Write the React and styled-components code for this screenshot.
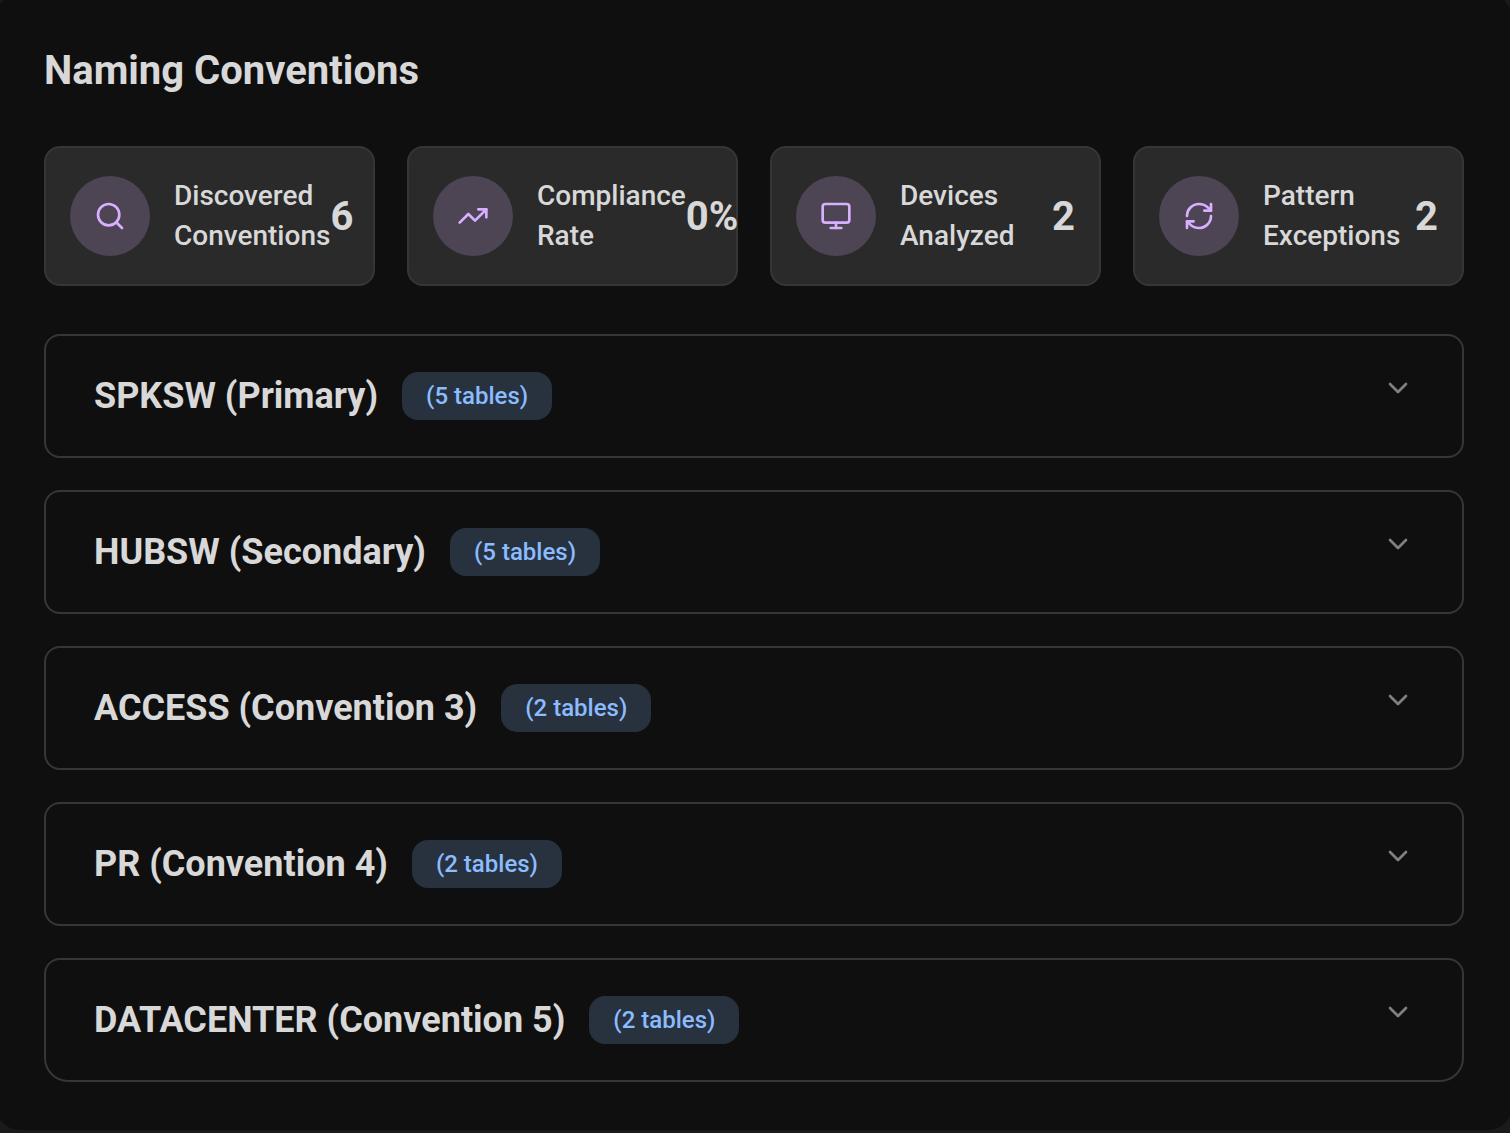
import React, { useState } from "react";
import styled, { createGlobalStyle } from "styled-components";
import { Search, TrendingUp, Monitor, RefreshCw, ChevronDown } from "lucide-react";

const GlobalStyle = createGlobalStyle`
  *, *::before, *::after { box-sizing: border-box; }
  html { background: #1a1a1a; }
  body {
    margin: 0;
    background: #1a1a1a;
    color: #d8d8d8;
    font-family: Roboto, "Liberation Sans", sans-serif;
  }
`;

const Page = styled.div`
  overflow: hidden;
  padding-bottom: 3px;
`;

const Panel = styled.main`
  margin: -6px -2px 0 -4px;
  padding: 48px;
  border-radius: 24px;
  background: #0f0f0f;
`;

const Title = styled.h1`
  margin: 0 0 46px;
  font-size: 40px;
  font-weight: 700;
  line-height: 58px;
`;

const Stats = styled.section`
  display: grid;
  grid-template-columns: repeat(4, minmax(0, 1fr));
  gap: 32px;
  margin-bottom: 48px;
`;

const StatCard = styled.div`
  display: flex;
  align-items: center;
  justify-content: space-between;
  padding: 28px 24px;
  border: 2px solid #363636;
  border-radius: 16px;
  background: #2a2a2a;
`;

const StatInfo = styled.div`
  display: flex;
  align-items: center;
  gap: 24px;
`;

const StatIcon = styled.span`
  display: flex;
  flex: none;
  align-items: center;
  justify-content: center;
  width: 80px;
  height: 80px;
  border-radius: 50%;
  background: #4d4454;
  color: #d8b0ff;
`;

const StatLabel = styled.span`
  font-size: 28px;
  font-weight: 500;
  line-height: 40px;
`;

const StatValue = styled.strong`
  font-size: 40px;
  font-weight: 700;
  line-height: 47px;
`;

const List = styled.section`
  display: flex;
  flex-direction: column;
  gap: 32px;
`;

const Item = styled.div`
  border: 2px solid #363636;
  border-radius: 16px;

  &:last-child {
    border-radius: 16px 16px 24px 24px;
  }
`;

const ItemHeader = styled.button`
  display: flex;
  align-items: flex-start;
  justify-content: space-between;
  width: 100%;
  padding: 36px 48px;
  border: 0;
  background: none;
  color: inherit;
  font: inherit;
  text-align: left;
  cursor: pointer;
`;

const Heading = styled.span`
  display: flex;
  align-items: center;
  gap: 24px;
`;

const ItemName = styled.span`
  font-size: 36px;
  font-weight: 700;
  line-height: 48px;
`;

const Badge = styled.span`
  padding: 0 24px;
  border-radius: 16px;
  background: #28323f;
  color: #8abcff;
  font-size: 24px;
  font-weight: 500;
  line-height: 48px;
`;

const Chevron = styled(ChevronDown)`
  flex: none;
  color: #808080;
  transform: ${(p) => (p.$open ? "rotate(180deg)" : "none")};
`;

const stats = [
  { icon: Search, label: "Discovered Conventions", value: "6" },
  { icon: TrendingUp, label: "Compliance Rate", value: "0%" },
  { icon: Monitor, label: "Devices Analyzed", value: "2" },
  { icon: RefreshCw, label: "Pattern Exceptions", value: "2" },
];

const conventions = [
  { name: "SPKSW (Primary)", tables: 5 },
  { name: "HUBSW (Secondary)", tables: 5 },
  { name: "ACCESS (Convention 3)", tables: 2 },
  { name: "PR (Convention 4)", tables: 2 },
  { name: "DATACENTER (Convention 5)", tables: 2 },
];

function Convention({ name, tables }) {
  const [open, setOpen] = useState(false);
  return (
    <Item>
      <ItemHeader type="button" aria-expanded={open} onClick={() => setOpen(!open)}>
        <Heading>
          <ItemName>{name}</ItemName>
          <Badge>{`(${tables} tables)`}</Badge>
        </Heading>
        <Chevron size={32} $open={open} aria-hidden="true" />
      </ItemHeader>
    </Item>
  );
}

export default function App() {
  return (
    <Page>
      <GlobalStyle />
      <Panel>
        <Title>Naming Conventions</Title>
        <Stats>
          {stats.map(({ icon: Icon, label, value }) => (
            <StatCard key={label}>
              <StatInfo>
                <StatIcon>
                  <Icon size={32} aria-hidden="true" />
                </StatIcon>
                <StatLabel>{label}</StatLabel>
              </StatInfo>
              <StatValue>{value}</StatValue>
            </StatCard>
          ))}
        </Stats>
        <List>
          {conventions.map((c) => (
            <Convention key={c.name} {...c} />
          ))}
        </List>
      </Panel>
    </Page>
  );
}
